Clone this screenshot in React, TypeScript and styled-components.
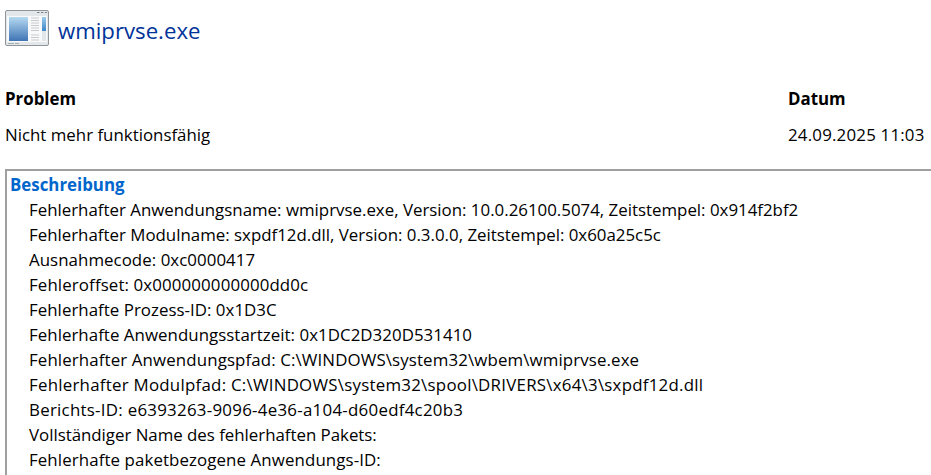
import React from "react";
import styled, { createGlobalStyle } from "styled-components";

const GlobalStyle = createGlobalStyle`
  html, body {
    margin: 0;
    padding: 0;
    background: #fff;
    overflow: hidden;
  }
  body {
    font-family: "Open Sans", "Noto Sans", "Liberation Sans", sans-serif;
    color: #000;
  }
`;

const Page = styled.div`
  width: 931px;
  height: 475px;
  overflow: hidden;
  padding: 8px 0 0 5px;
  box-sizing: border-box;
`;

const Header = styled.div`
  display: flex;
  align-items: center;
  gap: 9px;
  height: 40px;
`;

const Title = styled.div`
  font-size: 22.2px;
  color: #003399;
  line-height: 28px;
  padding-top: 6px;
`;

const Summary = styled.div`
  display: grid;
  grid-template-columns: 783px 1fr;
  row-gap: 12px;
  margin-top: 39px;
  font-size: 16.87px;
  line-height: 24px;
  white-space: nowrap;
`;

const HeadCell = styled.div`
  font-weight: 700;
`;

const Cell = styled.div<{ $track?: number }>`
  letter-spacing: ${(p) => p.$track ?? 0}px;
`;

const DetailBox = styled.div`
  margin-top: 22px;
  height: 400px;
  width: 940px;
  border: 2px solid #a0a0a0;
  border-right: 0;
  padding: 2px 0 0 3px;
  box-sizing: border-box;
`;

const SectionTitle = styled.div`
  font-size: 16.87px;
  font-weight: 700;
  line-height: 24px;
  color: #0066cc;
`;

const DetailList = styled.div`
  padding-left: 19px;
  font-size: 16.87px;
  line-height: 25px;
  white-space: nowrap;
`;

const DetailLine = styled.div<{ $track: number }>`
  letter-spacing: ${(p) => p.$track}px;
`;

const lines = [
  { text: "Fehlerhafter Anwendungsname: wmiprvse.exe, Version: 10.0.26100.5074, Zeitstempel: 0x914f2bf2", track: 0 },
  { text: "Fehlerhafter Modulname: sxpdf12d.dll, Version: 0.3.0.0, Zeitstempel: 0x60a25c5c", track: 0 },
  { text: "Ausnahmecode: 0xc0000417", track: 0.05 },
  { text: "Fehleroffset: 0x000000000000dd0c", track: 0.12 },
  { text: "Fehlerhafte Prozess-ID: 0x1D3C", track: 0.03 },
  { text: "Fehlerhafte Anwendungsstartzeit: 0x1DC2D320D531410", track: 0.04 },
  { text: "Fehlerhafter Anwendungspfad: C:\\WINDOWS\\system32\\wbem\\wmiprvse.exe", track: 0.12 },
  { text: "Fehlerhafter Modulpfad: C:\\WINDOWS\\system32\\spool\\DRIVERS\\x64\\3\\sxpdf12d.dll", track: 0.25 },
  { text: "Berichts-ID: e6393263-9096-4e36-a104-d60edf4c20b3", track: 0.27 },
  { text: "Vollständiger Name des fehlerhaften Pakets:", track: -0.02 },
  { text: "Fehlerhafte paketbezogene Anwendungs-ID:", track: 0.1 },
];

const AppIcon = () => (
  <svg width="44" height="36" viewBox="0 0 44 36">
    <defs>
      <linearGradient id="pane" x1="0" y1="0" x2="0" y2="1">
        <stop offset="0" stopColor="#b5d9f0" />
        <stop offset="1" stopColor="#3f74b4" />
      </linearGradient>
      <linearGradient id="bar" x1="0" y1="0" x2="0" y2="1">
        <stop offset="0" stopColor="#9ccbec" />
        <stop offset="1" stopColor="#3d86c8" />
      </linearGradient>
    </defs>
    <rect x="0.5" y="0.5" width="43" height="35" rx="1.5" fill="#e4e7ea" stroke="#8f9498" strokeWidth="1" />
    <rect x="2" y="6" width="40" height="26" fill="#f8f9fa" />
    <rect x="4" y="7" width="19" height="24" fill="url(#pane)" />
    <path d="M26 8h8M26 10.5h8M26 13h8M26 15.5h8M26 18h8M26 20.5h8M26 25h8M26 27.5h8M26 30h8" stroke="#c8cbce" strokeWidth="1" />
    <rect x="37" y="7" width="4" height="14" fill="url(#bar)" />
    <rect x="37" y="21" width="4" height="10" fill="#e3e6e9" />
    <path d="M32 2.5h2.5M36 2.5h2.5M40 2.5h2" stroke="#7d8388" strokeWidth="1" />
    <path d="M3 33.5h6M10 33.5h4" stroke="#a9aeb2" strokeWidth="1" />
  </svg>
);

export default function App() {
  return (
    <>
      <GlobalStyle />
      <Page>
        <Header>
          <AppIcon />
          <Title>wmiprvse.exe</Title>
        </Header>
        <Summary>
          <HeadCell>Problem</HeadCell>
          <HeadCell>Datum</HeadCell>
          <Cell>Nicht mehr funktionsfähig</Cell>
          <Cell $track={0.2}>24.09.2025 11:03</Cell>
        </Summary>
        <DetailBox>
          <SectionTitle>Beschreibung</SectionTitle>
          <DetailList>
            {lines.map((line) => (
              <DetailLine key={line.text} $track={line.track}>
                {line.text}
              </DetailLine>
            ))}
          </DetailList>
        </DetailBox>
      </Page>
    </>
  );
}
